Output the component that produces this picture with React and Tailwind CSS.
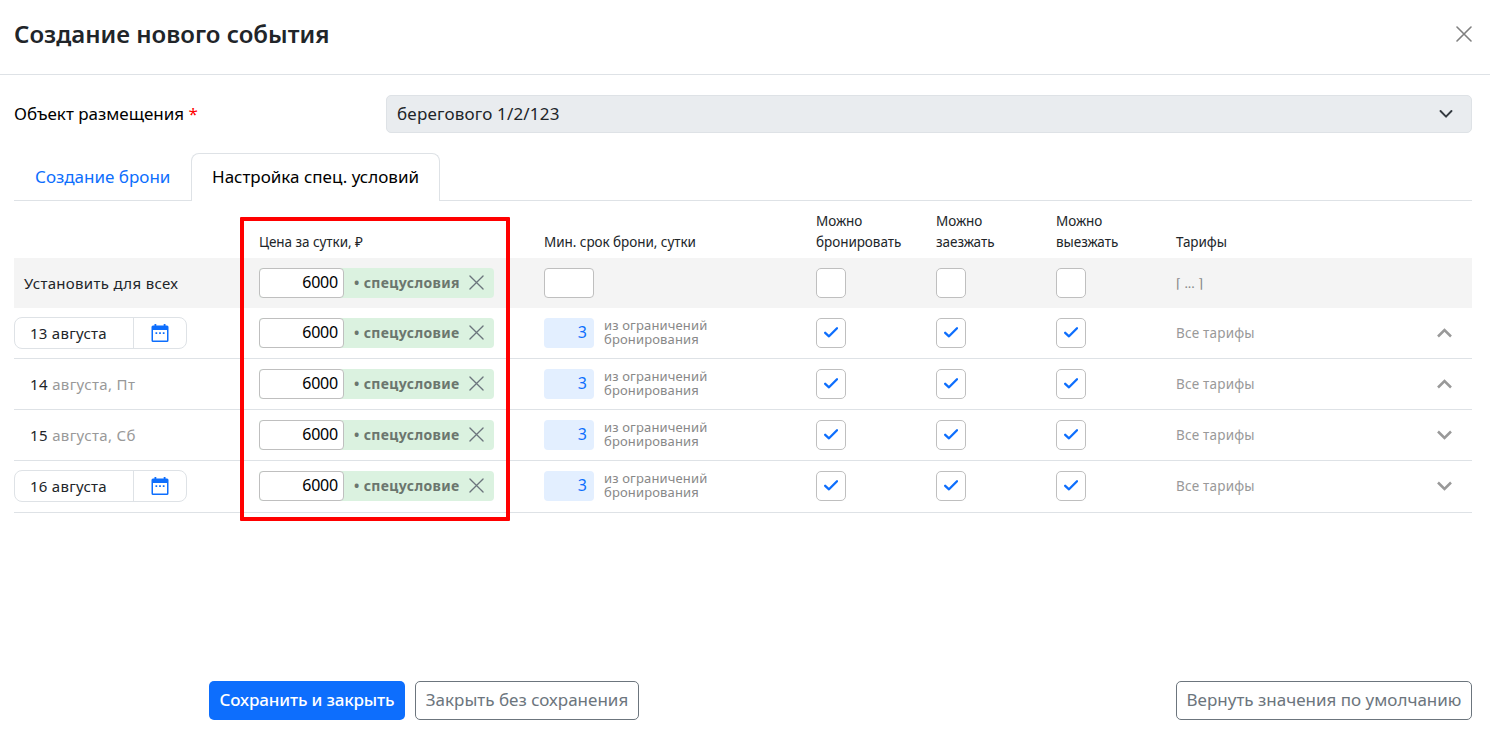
import { useState } from 'react';

const ALL_ROW = { price: '6000', badge: 'спецусловия' };

const DAYS = [
  { day: '13', rest: 'августа', picker: true, open: true, height: 'h-[51px]' },
  { day: '14', rest: 'августа, Пт', picker: false, open: true, height: 'h-[51px]' },
  { day: '15', rest: 'августа, Сб', picker: false, open: false, height: 'h-[51px]' },
  { day: '16', rest: 'августа', picker: true, open: false, height: 'h-[52px] pb-px' },
];

const GRID = 'grid grid-cols-[245px_285px_272px_120px_120px_120px_1fr]';

function CrossIcon({ className }) {
  return (
    <svg viewBox="0 0 16 16" className={className} fill="none" stroke="currentColor" strokeLinecap="round">
      <path d="M1 1L15 15M15 1L1 15" />
    </svg>
  );
}

function CalendarIcon() {
  return (
    <svg viewBox="0 0 18 18" className="h-[18px] w-[18px]" fill="#0d6efd">
      <path
        fillRule="evenodd"
        d="M3.5 0h1.8v1.6h7.400V0h1.800v1.600H16a1.500 1.500 0 0 1 1.500 1.500v13.400A1.500 1.500 0 0 1 16 18H2a1.500 1.500 0 0 1-1.500-1.500V3.100A1.500 1.500 0 0 1 2 1.600h1.500zM2 6v10.500h14V6z"
      />
      <path d="M4.500 8.200h1.700v1.700H4.500zM8.150 8.200h1.700v1.700h-1.700zM11.800 8.200h1.700v1.700h-1.700z" />
    </svg>
  );
}

function Chevron({ open }) {
  return (
    <svg viewBox="0 0 15 10" className="h-[10px] w-[15px]" fill="none" stroke="#999" strokeWidth="2.5">
      <path d={open ? 'M1 8.500L7.500 2L14 8.500' : 'M1 1.500L7.500 8L14 1.500'} />
    </svg>
  );
}

function CheckBox({ initial }) {
  const [checked, setChecked] = useState(initial);
  return (
    <button
      type="button"
      onClick={() => setChecked(!checked)}
      className="flex h-[30px] w-[30px] items-center justify-center rounded-[5px] border border-[#bfbfbf] bg-white"
    >
      {checked && (
        <svg viewBox="0 0 14 12" className="mr-px mb-0.5 h-3 w-3.5" fill="none" stroke="#0d6efd" strokeWidth="2.3">
          <path d="M1.200 6.800L5 10.300L13 2.200" strokeLinecap="round" strokeLinejoin="round" />
        </svg>
      )}
    </button>
  );
}

function PriceField({ price, badge }) {
  return (
    <div className="flex h-[30px] w-[235px] items-center rounded-[4px] bg-[#dbf2e0] text-[#6b766e]">
      <div className="flex h-[30px] w-[85px] items-center justify-end rounded-[4px] border border-[#bfbfbf] bg-white pr-[5px] pb-0.5 text-[16px] tracking-[-0.2px] text-black">
        {price}
      </div>
      <span className="ml-[10px] w-[115px] pb-0.5 text-[14px] font-bold tracking-[0.36px] whitespace-nowrap">• {badge}</span>
      <CrossIcon className="mb-px h-[15px] w-[15px] stroke-[1.4] text-[#6c757d]" />
    </div>
  );
}

function DateCell({ day, rest, picker }) {
  if (!picker) {
    return (
      <div className="pl-4 text-[15px] tracking-[0.36px] text-[#999]">
        <span className="text-[#212529]">{day}</span> {rest}
      </div>
    );
  }
  return (
    <div className="flex h-8 w-[173px] rounded-[8px] border border-[#dee2e6] text-[15px] tracking-[0.25px] text-[#212529]">
      <div className="flex w-[119px] items-center border-r border-[#dee2e6] pl-[15px]">
        {day} {rest}
      </div>
      <div className="flex flex-1 items-center justify-center">
        <CalendarIcon />
      </div>
    </div>
  );
}

function DayRow({ item }) {
  return (
    <div className={`${GRID} ${item.height} items-center border-b border-[#dee2e6]`}>
      <DateCell {...item} />
      <PriceField price="6000" badge="спецусловие" />
      <div className="flex items-center">
        <div className="flex h-[30px] w-[50px] items-center justify-end rounded-[4px] bg-[#e3efff] pr-[7px] pb-0.5 text-[16px] text-[#0d6efd]">
          3
        </div>
        <div className="ml-2.5 pb-0.5 text-[13px] leading-[14px] tracking-[0.15px] text-[#888]">
          из ограничений
          <br />
          бронирования
        </div>
      </div>
      <CheckBox initial />
      <CheckBox initial />
      <CheckBox initial />
      <div className="flex items-center justify-between pr-5 text-[13.5px] tracking-[0.2px] text-[#999]">
        <span>Все тарифы</span>
        <Chevron open={item.open} />
      </div>
    </div>
  );
}

export default function App() {
  return (
    <div className="flex h-[734px] w-[1490px] flex-col overflow-hidden bg-white font-['Noto_Sans',sans-serif] text-[#212529]">
      <header className="flex h-[75px] items-center justify-between border-b border-[#dee2e6] pr-[18px] pb-[6px] pl-[14px]">
        <h1 className="text-[24px] font-semibold">Создание нового события</h1>
        <CrossIcon className="h-4 w-4 stroke-[1.6] text-[#808080]" />
      </header>

      <main className="flex-1 px-[14px] pr-[18px] pt-5">
        <div className="flex items-center">
          <label className="w-[372px] pb-px text-[17px] text-black">
            Объект размещения <span className="text-[#f00]">*</span>
          </label>
          <div className="flex h-[38px] flex-1 items-center justify-between rounded-[5px] border border-[#dee2e6] bg-[#e9ecef] pr-[18px] pl-2.5 text-[17px]">
            <span className="pb-px tracking-[0.18px]">берегового 1/2/123</span>
            <svg viewBox="0 0 16 16" className="-mr-px h-4 w-4" fill="none" stroke="#343a40" strokeWidth="1.9">
              <path d="M2.500 5l5.500 5.700L13.500 5" strokeLinecap="round" strokeLinejoin="round" />
            </svg>
          </div>
        </div>

        <nav className="mt-5 flex h-12 border-b border-[#dee2e6] text-[17px]">
          <button type="button" className="w-[177px] pl-[21px] text-left text-[#0d6efd]">
            Создание брони
          </button>
          <button
            type="button"
            className="-mb-px w-[249px] rounded-t-[8px] border border-b-0 border-[#dee2e6] bg-white pb-[2px] pl-5 text-left text-black"
          >
            Настройка спец. условий
          </button>
        </nav>

        <section className="relative">
          <div className={`${GRID} h-[57px] items-end pb-[5px] text-[13.5px] leading-[21px] tracking-[-0.05px]`}>
            <div />
            <div>Цена за сутки, ₽</div>
            <div>Мин. срок брони, сутки</div>
            <div>Можно<br />бронировать</div>
            <div>Можно<br />заезжать</div>
            <div>Можно<br />выезжать</div>
            <div>Тарифы</div>
          </div>

          <div className={`${GRID} h-[50px] items-center bg-[#f4f4f4]`}>
            <div className="pl-2.5 text-[15px] tracking-[0.32px]">Установить для всех</div>
            <PriceField {...ALL_ROW} />
            <div className="h-[30px] w-[50px] rounded-[4px] border border-[#bfbfbf] bg-white" />
            <CheckBox initial={false} />
            <CheckBox initial={false} />
            <CheckBox initial={false} />
            <div className="pt-px text-[13px] text-[#888]">⌈ ... ⌉</div>
          </div>

          {DAYS.map((item) => (
            <DayRow key={item.day} item={item} />
          ))}

          <div className="pointer-events-none absolute top-4 left-[226px] h-[304px] w-[270px] rounded-[1px] border-4 border-[#ff0000]" />
        </section>
      </main>

      <footer className="flex h-[53px] items-start pr-[18px] pl-[209px] text-[17px]">
        <button type="button" className="h-[39px] w-[196px] rounded-[5px] bg-[#0d6efd] pb-0.5 font-medium tracking-[-0.15px] whitespace-nowrap text-white">
          Сохранить и закрыть
        </button>
        <button type="button" className="ml-2.5 h-[39px] w-[224px] rounded-[5px] border border-[#6c757d] pb-0.5 whitespace-nowrap text-[#6c757d]">
          Закрыть без сохранения
        </button>
        <button type="button" className="ml-auto h-[39px] w-[296px] rounded-[5px] border border-[#6c757d] pb-0.5 whitespace-nowrap text-[#6c757d]">
          Вернуть значения по умолчанию
        </button>
      </footer>
    </div>
  );
}
